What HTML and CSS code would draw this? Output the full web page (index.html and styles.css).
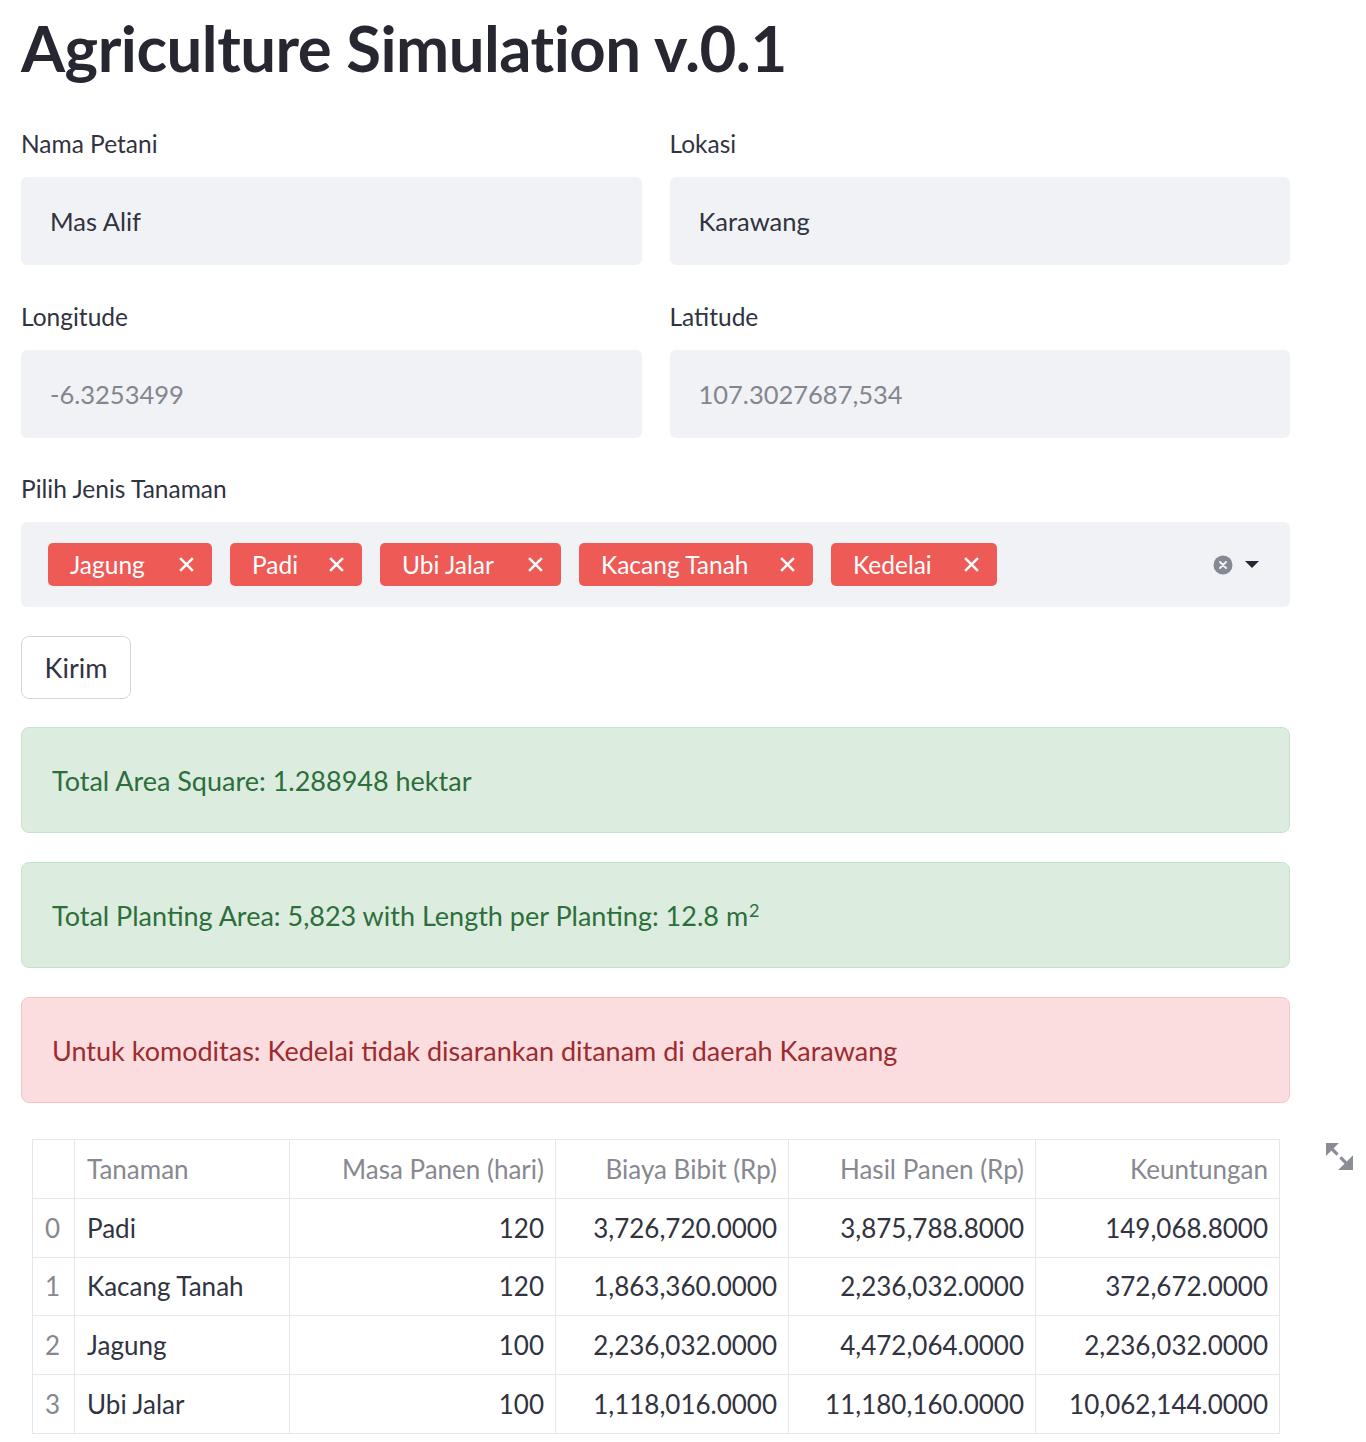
FILE: index.html
```html
<!DOCTYPE html>
<html lang="id">
<head>
<meta charset="utf-8">
<title>Agriculture Simulation v.0.1</title>
<link rel="stylesheet" href="styles.css">
</head>
<body>
<main class="app">
  <h1 class="title">Agriculture Simulation v.0.1</h1>

  <div class="row">
    <div class="field">
      <label class="label">Nama Petani</label>
      <div class="input">Mas Alif</div>
    </div>
    <div class="field">
      <label class="label">Lokasi</label>
      <div class="input">Karawang</div>
    </div>
  </div>

  <div class="row">
    <div class="field">
      <label class="label">Longitude</label>
      <div class="input muted">-6.3253499</div>
    </div>
    <div class="field">
      <label class="label">Latitude</label>
      <div class="input muted">107.3027687,534</div>
    </div>
  </div>

  <div class="field single">
    <label class="label">Pilih Jenis Tanaman</label>
    <div class="multiselect">
      <div class="tags">
        <span class="tag tag-jagung"><span class="tag-text">Jagung</span><svg class="tag-x" viewBox="0 0 16 16"><path d="M2 2L14 14M14 2L2 14"/></svg></span>
        <span class="tag tag-padi"><span class="tag-text">Padi</span><svg class="tag-x" viewBox="0 0 16 16"><path d="M2 2L14 14M14 2L2 14"/></svg></span>
        <span class="tag tag-ubi"><span class="tag-text">Ubi Jalar</span><svg class="tag-x" viewBox="0 0 16 16"><path d="M2 2L14 14M14 2L2 14"/></svg></span>
        <span class="tag tag-kacang"><span class="tag-text">Kacang Tanah</span><svg class="tag-x" viewBox="0 0 16 16"><path d="M2 2L14 14M14 2L2 14"/></svg></span>
        <span class="tag tag-kedelai"><span class="tag-text">Kedelai</span><svg class="tag-x" viewBox="0 0 16 16"><path d="M2 2L14 14M14 2L2 14"/></svg></span>
      </div>
      <div class="ms-controls">
        <svg class="clear" viewBox="0 0 20 20"><circle cx="10" cy="10" r="9.5" fill="#868892"/><path d="M7 7L13 13M13 7L7 13" stroke="#f0f2f6" stroke-width="2" stroke-linecap="round"/></svg>
        <svg class="caret" viewBox="0 0 14 8"><path d="M0 0H14L7 7Z" fill="#262730"/></svg>
      </div>
    </div>
  </div>

  <button class="btn" type="button">Kirim</button>

  <div class="alert success">Total Area Square: 1.288948 hektar</div>
  <div class="alert success">Total Planting Area: 5,823 with Length per Planting: 12.8 m<sup>2</sup></div>
  <div class="alert error">Untuk komoditas: Kedelai tidak disarankan ditanam di daerah Karawang</div>

  <div class="df-wrap">
    <table class="df">
      <colgroup>
        <col class="w-idx"><col class="w-tan"><col class="w-masa"><col class="w-biaya"><col class="w-hasil"><col class="w-untung">
      </colgroup>
      <thead>
        <tr><th class="idx"></th><th class="left">Tanaman</th><th>Masa Panen (hari)</th><th>Biaya Bibit (Rp)</th><th>Hasil Panen (Rp)</th><th>Keuntungan</th></tr>
      </thead>
      <tbody>
        <tr><td class="idx">0</td><td class="left">Padi</td><td>120</td><td>3,726,720.0000</td><td>3,875,788.8000</td><td>149,068.8000</td></tr>
        <tr><td class="idx">1</td><td class="left">Kacang Tanah</td><td>120</td><td>1,863,360.0000</td><td>2,236,032.0000</td><td>372,672.0000</td></tr>
        <tr><td class="idx">2</td><td class="left">Jagung</td><td>100</td><td>2,236,032.0000</td><td>4,472,064.0000</td><td>2,236,032.0000</td></tr>
        <tr><td class="idx">3</td><td class="left">Ubi Jalar</td><td>100</td><td>1,118,016.0000</td><td>11,180,160.0000</td><td>10,062,144.0000</td></tr>
      </tbody>
    </table>
    <svg class="expand" viewBox="0 0 28 28"><path d="M0 0H11L0 11Z M3 3L12 12" fill="#8a8c96" stroke="#8a8c96" stroke-width="3.4"/><path d="M27 27H16L27 16Z M24 24L15 15" fill="#8a8c96" stroke="#8a8c96" stroke-width="3.4"/></svg>
  </div>
</main>
</body>
</html>
```

FILE: styles.css
```css
* { box-sizing: border-box; }

html, body {
  margin: 0;
  padding: 0;
  background: #ffffff;
}

body {
  font-family: "Lato", "Liberation Sans", sans-serif;
  color: #31333f;
}

.app {
  width: 1290px;
  padding: 0 0 0 21px;
  display: flex;
  flex-direction: column;
}

.title {
  margin: 0;
  height: 129px;
  font-size: 63.5px;
  line-height: 96px;
  font-weight: 700;
  color: #262730;
  letter-spacing: -0.5px;
}

.row {
  display: flex;
  gap: 28px;
  margin-bottom: 36.5px;
}

.field {
  flex: 1 1 0;
  display: flex;
  flex-direction: column;
}

.field.single {
  margin-bottom: 29px;
}

.label {
  height: 30px;
  line-height: 30px;
  font-size: 24.5px;
  margin-bottom: 18px;
  color: #31333f;
}

.input {
  height: 88px;
  background: #f0f2f6;
  border-radius: 6px;
  padding: 0 29px;
  display: flex;
  align-items: center;
  font-size: 25.5px;
  color: #31333f;
}

.input.muted {
  color: #84868f;
}

.multiselect {
  height: 85px;
  background: #f0f2f6;
  border-radius: 6px;
  display: flex;
  align-items: center;
  justify-content: space-between;
  padding: 0 31px 0 27px;
}

.tags {
  display: flex;
  gap: 18px;
}

.tag {
  height: 43px;
  background: #ee5a55;
  color: #ffffff;
  border-radius: 5px;
  display: flex;
  align-items: center;
  justify-content: space-between;
  padding: 0 17px 0 22px;
  font-size: 24.5px;
}

.tag-jagung { width: 164px; }
.tag-padi { width: 132px; }
.tag-ubi { width: 181px; }
.tag-kacang { width: 234px; }
.tag-kedelai { width: 166px; }

.tag-x {
  width: 17px;
  height: 17px;
  stroke: #ffffff;
  stroke-width: 2.4;
  fill: none;
}

.ms-controls {
  display: flex;
  align-items: center;
  gap: 12px;
}

.clear {
  width: 20px;
  height: 20px;
}

.caret {
  width: 14px;
  height: 8px;
}

.btn {
  align-self: flex-start;
  width: 110px;
  height: 63px;
  background: #ffffff;
  border: 1px solid #d5d6d9;
  border-radius: 8px;
  font-family: inherit;
  font-size: 27px;
  color: #31333f;
  padding: 0;
  margin-bottom: 28px;
}

.alert {
  height: 106px;
  border-radius: 8px;
  border: 1px solid;
  padding: 0 30px;
  display: flex;
  align-items: center;
  font-size: 27px;
  margin-bottom: 29px;
}

.alert sup {
  font-size: 18px;
  line-height: 0;
  position: relative;
  top: -5px;
  margin-left: 1px;
}

.success {
  background: #dcede0;
  border-color: #c3e3ca;
  color: #2d6e3b;
}

.error {
  background: #fbdddf;
  border-color: #f6c4c7;
  color: #9d2b30;
  margin-bottom: 36px;
}

.df-wrap {
  position: relative;
  margin: 0 11px;
}

.df {
  width: 1247px;
  table-layout: fixed;
  border-collapse: collapse;
  font-size: 26px;
}

.w-idx { width: 42px; }
.w-tan { width: 215px; }
.w-masa { width: 266px; }
.w-biaya { width: 233px; }
.w-hasil { width: 247px; }
.w-untung { width: 244px; }

.df th,
.df td {
  height: 58.8px;
  border: 1px solid #e6e7ea;
  padding: 0 11px 0 12px;
  text-align: right;
  white-space: nowrap;
  font-weight: 400;
}

.df th {
  color: #878890;
}

.df td {
  color: #31333f;
}

.df .left { text-align: left; }

.df .idx {
  text-align: left;
  color: #878890;
}

.expand {
  position: absolute;
  top: 4px;
  right: -74px;
  width: 27px;
  height: 27px;
}
```
